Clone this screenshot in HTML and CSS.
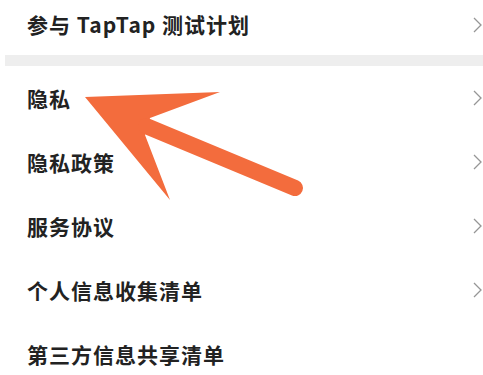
FILE: index.html
```html
<!DOCTYPE html>
<html lang="zh-CN">
<head>
<meta charset="utf-8">
<title>设置</title>
<link rel="stylesheet" href="styles.css">
</head>
<body>
<div class="page">
  <ul class="list first">
    <li class="row top"><span class="label">参与 TapTap 测试计划</span><svg class="chev" viewBox="0 0 9 16"><polyline points="1,1 8,8 1,15"/></svg></li>
  </ul>
  <div class="sep"></div>
  <ul class="list">
    <li class="row"><span class="label">隐私</span><svg class="chev" viewBox="0 0 9 16"><polyline points="1,1 8,8 1,15"/></svg></li>
    <li class="row"><span class="label">隐私政策</span><svg class="chev" viewBox="0 0 9 16"><polyline points="1,1 8,8 1,15"/></svg></li>
    <li class="row"><span class="label">服务协议</span><svg class="chev" viewBox="0 0 9 16"><polyline points="1,1 8,8 1,15"/></svg></li>
    <li class="row"><span class="label">个人信息收集清单</span><svg class="chev" viewBox="0 0 9 16"><polyline points="1,1 8,8 1,15"/></svg></li>
    <li class="row"><span class="label">第三方信息共享清单</span></li>
  </ul>
  <svg class="arrow" viewBox="0 0 483 375" width="483" height="375">
    <polygon class="head" points="85,97 220,92 150,118 145,135 170,200"/>
    <line class="shaft" x1="146" y1="126" x2="295" y2="188"/>
  </svg>
</div>
</body>
</html>
```

FILE: styles.css
```css
html, body {
  margin: 0;
  padding: 0;
  background: #ffffff;
}
.page {
  position: relative;
  width: 483px;
  height: 375px;
  overflow: hidden;
  font-family: "Noto Sans CJK SC", "Noto Sans", sans-serif;
}
.list {
  list-style: none;
  margin: 0;
  padding: 0;
}
.row {
  display: flex;
  align-items: center;
  justify-content: space-between;
  height: 64px;
  padding-left: 27px;
  padding-right: 1px;
}
.row.top {
  height: 55px;
  padding-bottom: 6px;
  box-sizing: border-box;
}
.label {
  font-size: 21px;
  font-weight: 700;
  letter-spacing: 1px;
  color: #222222;
  line-height: 1;
}
.chev {
  width: 9px;
  height: 16px;
  fill: none;
  stroke: #969696;
  stroke-width: 1.3;
}
.sep {
  height: 11px;
  margin-left: 5px;
  background: #eeeeee;
}
.arrow {
  position: absolute;
  left: 0;
  top: 0;
}
.head {
  fill: #f36c3d;
}
.shaft {
  stroke: #f36c3d;
  stroke-width: 16;
  stroke-linecap: round;
}
```
